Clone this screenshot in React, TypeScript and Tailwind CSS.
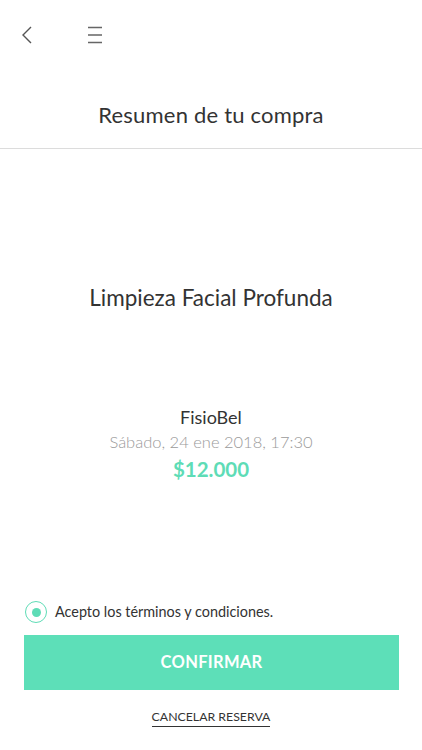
import React from "react";

const font = { fontFamily: "Lato, 'Open Sans', sans-serif" };

const App: React.FC = () => {
  return (
    <div className="flex h-[750px] w-[422px] flex-col bg-white text-[#333]" style={font}>
      {/* Top bar */}
      <div className="flex h-[70px] items-center pl-[21px]">
        <svg width="12" height="20" viewBox="0 0 12 20" fill="none" stroke="#555" strokeWidth="1.4">
          <path d="M10 2 L2 10 L10 18" />
        </svg>
        <svg className="ml-[54px]" width="16" height="18" viewBox="0 0 16 18" fill="none" stroke="#666" strokeWidth="1.3">
          <path d="M1 1.5 H15 M1 9 H15 M1 16.5 H15" />
        </svg>
      </div>

      {/* Header */}
      <div className="flex h-[79px] items-center justify-center border-b border-[#dcdcdc] pt-[10px]">
        <h1 className="text-[22px] tracking-[0.2px] text-[#333]">Resumen de tu compra</h1>
      </div>

      {/* Service */}
      <div className="flex h-[256px] flex-col items-center pt-[134px]">
        <h2 className="text-[22.5px] leading-[30px] text-[#333]">Limpieza Facial Profunda</h2>
      </div>

      {/* Details */}
      <div className="flex flex-col items-center leading-[25px]">
        <p className="text-[18px] text-[#333]">FisioBel</p>
        <p className="text-[16.5px] font-light text-[#9a9a9a]">Sábado, 24 ene 2018, 17:30</p>
        <p className="mt-[2px] text-[20.5px] font-bold text-[#5edcb6]">$12.000</p>
      </div>

      <div className="flex-1" />

      {/* Terms */}
      <div className="flex items-center gap-[8px] pl-[25px] pr-[24px] pb-[12px]">
        <span className="flex h-[22px] w-[22px] items-center justify-center rounded-full border-[1.5px] border-[#5edcb6]">
          <span className="h-[9px] w-[9px] rounded-full bg-[#5edcb6]" />
        </span>
        <span className="text-[14.4px] text-[#333]">Acepto los términos y condiciones.</span>
      </div>

      {/* Confirm */}
      <div className="pl-[24px] pr-[23px]">
        <button className="flex h-[55px] w-full items-center justify-center bg-[#5ddfb8] text-[16.5px] font-bold tracking-[0.3px] text-white">
          CONFIRMAR
        </button>
      </div>

      <div className="flex h-[60px] items-start justify-center pt-[19px]">
        <span className="border-b-[1.5px] border-[#333] pb-[2px] text-[12.3px] leading-[15px] text-[#333]">CANCELAR RESERVA</span>
      </div>
    </div>
  );
};

export default App;
